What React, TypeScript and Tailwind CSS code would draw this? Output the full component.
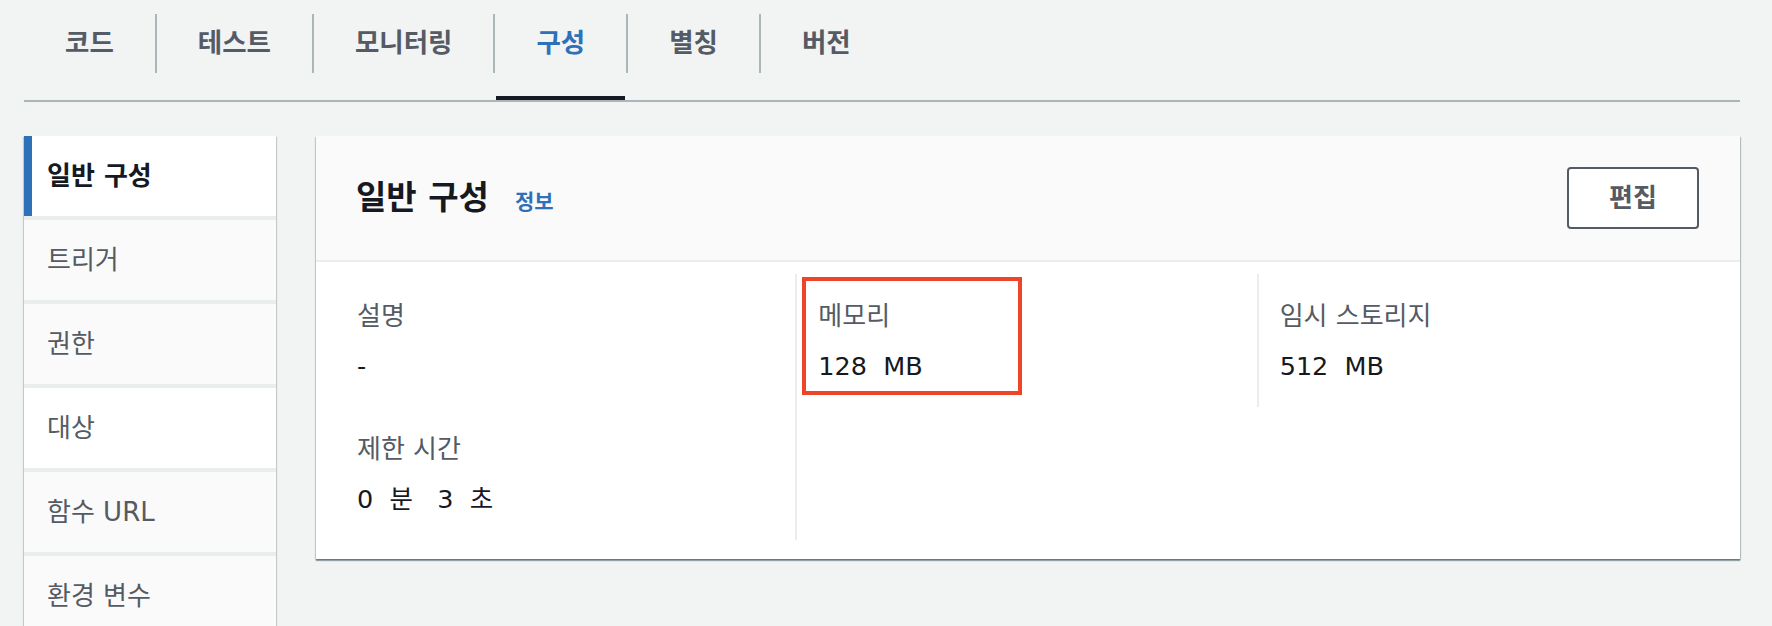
import React from "react";

const FONT = '"DejaVu Sans", "Noto Sans CJK KR", sans-serif';

const tabs = ["코드", "테스트", "모니터링", "구성", "별칭", "버전"];
const sideItems = ["일반 구성", "트리거", "권한", "대상", "함수 URL", "환경 변수"];

function Tabs() {
  return (
    <div className="flex border-b-2 border-[#aab7b8]">
      {tabs.map((t, i) => {
        const active = t === "구성";
        const last = i === tabs.length - 1;
        return (
          <div key={t} className="flex flex-col">
            <div className="pt-[14px]">
              <div
                className={`h-[59px] flex items-center px-[41px] text-[26.5px] font-bold leading-none ${
                  last ? "border-r-2 border-transparent" : "border-r-2 border-[#aab7b8]"
                } ${active ? "text-[#2f71b8]" : "text-[#545b64]"}`}
              >
                {t}
              </div>
            </div>
            <div className="h-[23px]" />
            <div className={`h-[4px] ml-[1px] mr-[3px] ${active ? "bg-[#16191f]" : "bg-transparent"}`} />
          </div>
        );
      })}
    </div>
  );
}

function Sidebar() {
  return (
    <div className="w-[252px] shrink-0 bg-[#eaeded] flex flex-col gap-[4px] shadow-[0_1px_1px_0_rgba(0,28,36,0.3),1px_1px_1px_0_rgba(0,28,36,0.15),-1px_1px_1px_0_rgba(0,28,36,0.15)]">
      {sideItems.map((s, i) => {
        const active = i === 0;
        const white = i === 0 || i === 3;
        return (
          <div
            key={s}
            className={`h-[80px] shrink-0 flex items-center text-[26px] ${white ? "bg-white" : "bg-[#fafafa]"} ${
              active
                ? "border-l-[8px] border-[#2f71b8] pl-[15px] font-bold text-[#16191f]"
                : "pl-[23px] text-[#545b64]"
            }`}
          >
            {s}
          </div>
        );
      })}
    </div>
  );
}

function KV({ label, value, last }: { label: string; value: string; last?: boolean }) {
  return (
    <div className={last ? "" : "mb-[47px]"}>
      <div className="text-[26px] leading-[36px] text-[#545b64] mb-[14px]">{label}</div>
      <div className="text-[25.5px] leading-[36px] text-[#16191f] whitespace-pre">{value}</div>
    </div>
  );
}

function Panel() {
  return (
    <div className="flex-1 bg-white shadow-[0_2px_1px_0_rgba(0,28,36,0.35),1px_1px_1px_0_rgba(0,28,36,0.2),-1px_1px_1px_0_rgba(0,28,36,0.15)] self-start">
      <div className="h-[126px] bg-[#fafafa] border-b-2 border-[#eaeded] flex items-center justify-between pl-[40px] pr-[41px]">
        <div className="flex items-baseline">
          <span className="text-[33px] font-bold text-[#16191f]">일반 구성</span>
          <span className="ml-[26px] text-[21px] font-bold text-[#2f71b8]">정보</span>
        </div>
        <button className="w-[132px] h-[62px] border-2 border-[#545b64] rounded-[4px] bg-white text-[26px] font-bold text-[#545b64] flex items-center justify-center">
          편집
        </button>
      </div>
      <div className="grid grid-cols-3 items-start px-[20px] pt-[12px] pb-[19px]">
        <div className="border-r-2 border-[#eaeded] pl-[21px] pt-[24px] pb-[23px]">
          <KV label="설명" value="-" />
          <KV label="제한 시간" value={"0  분   3  초"} last />
        </div>
        <div className="relative border-r-2 border-[#eaeded] pl-[21px] pt-[24px] pb-[23px]">
          <KV label="메모리" value={"128  MB"} last />
          <div className="absolute left-[5px] top-[3px] w-[220px] h-[118px] border-4 border-[#ee4528]" />
        </div>
        <div className="pl-[21px] pt-[24px] pb-[23px]">
          <KV label="임시 스토리지" value={"512  MB"} last />
        </div>
      </div>
    </div>
  );
}

export default function App() {
  return (
    <div className="w-[1772px] h-[626px] overflow-hidden bg-[#f2f3f3]" style={{ fontFamily: FONT }}>
      <div className="pl-[24px] pr-[32px]">
        <Tabs />
      </div>
      <div className="flex items-start gap-[40px] pl-[24px] pr-[32px] pt-[34px]">
        <Sidebar />
        <Panel />
      </div>
    </div>
  );
}
